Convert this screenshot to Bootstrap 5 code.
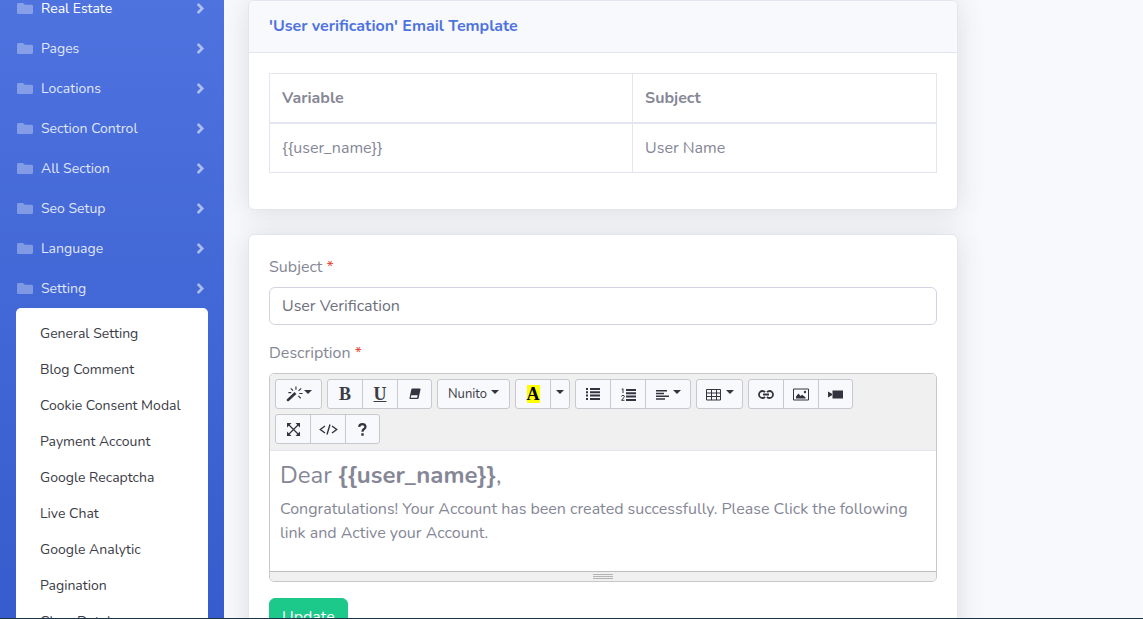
<!DOCTYPE html>
<html lang="en">
<head>
<meta charset="utf-8">
<meta name="viewport" content="width=device-width, initial-scale=1">
<title>User verification Email Template</title>
<link href="https://cdn.jsdelivr.net/npm/bootstrap@5.3.0/dist/css/bootstrap.min.css" rel="stylesheet">
<script src="https://cdn.jsdelivr.net/npm/bootstrap@5.3.0/dist/js/bootstrap.bundle.min.js" defer></script>
<style>
  body { font-family: Nunito, Lato, sans-serif; font-size: 16px; line-height: 24px; color: #858796; background: #f8f9fc; }
  .admin-sidebar { width: 224px; background: linear-gradient(180deg, #4e73df 0%, #365ccd 100%); }
  .side-list { margin-top: -12px; }
  .side-link { height: 40px; padding: 2px 20px 0 17px; gap: 8px; font-size: 14px; color: rgba(255,255,255,.85); text-decoration: none; }
  .side-link:hover { color: #fff; }
  .side-link svg { fill: #fff; flex: none; margin-bottom: 2px; }
  .side-link .folder { opacity: .32; }
  .side-link .angle { opacity: .55; margin-left: auto; }
  .side-sub { margin: 0 16px; padding: 8px 0; border-radius: 5px; background: #fff; }
  .side-sub a { display: block; padding: 0 24px; font-size: 14px; line-height: 36px; color: #3a3b45; text-decoration: none; }
  .content-col { max-width: 710px; }
  .panel { border: 1px solid #e3e6f0; border-radius: 6px; box-shadow: 0 2px 28px rgba(58,59,69,.15); }
  .panel .card-header { padding: 13px 20px; background: #f8f9fc; border-bottom: 1px solid #e3e6f0; }
  .panel .card-body { padding: 20px; }
  .panel h1 { font-size: 16px; line-height: 25px; color: #4e73df; }
  .var-table { color: #858796; border-color: #e3e6f0; }
  .var-table th, .var-table td { padding: 12px; border: 1px solid #e3e6f0; color: #858796; background: #fff; }
  .var-table thead th { border-bottom-width: 2px; }
  .form-label { margin-bottom: 8px; }
  .req { color: #e74a3b; }
  .subject-input, .subject-input:focus { height: 38px; border: 1px solid #d1d3e2; border-radius: 6px; color: #6e707e; }
  .editor { border: 1px solid #c8c8cb; border-radius: 5px; overflow: hidden; }
  .editor-bar { padding: 5px 5px 6px; gap: 5px; background: #f0f0f0; border-bottom: 1px solid #e3e6f0; }
  .tool-group { display: flex; height: 30px; border: 1px solid #c8c9ce; border-radius: 3px; background: #f8f9fc; overflow: hidden; }
  .tool { display: flex; align-items: center; justify-content: center; width: 35px; padding: 0; border: 0; background: transparent; color: #3a3b45; font-size: 13px; line-height: 28px; }
  .tool + .tool { border-left: 1px solid #c8c9ce; }
  .tool-group .tool:first-child, .tool-group .tool:last-child { width: 34px; }
  .tool-group .tool.tool-wide { width: 45px; }
  .tool-group .tool.tool-font { width: 71px; }
  .tool-group .tool.tool-caret { width: 19px; }
  .tool svg { fill: #33343f; stroke: none; flex: none; }
  .tool svg .ln { fill: none; stroke: #33343f; }
  .tool .caret { width: 8px; height: 4px; margin-bottom: 5px; }
  .serif { font-family: "Liberation Serif", serif; font-weight: 700; font-size: 18px; line-height: 18px; }
  .mark-a { color: #000; background: #ff0; }
  .editor-text { padding: 10px; background: #fff; }
  .editor-text h2 { font-size: 24px; line-height: 28px; margin-bottom: 8px; font-weight: 400; }
  .editor-text p { margin-bottom: 16px; }
  .editor-status { height: 10px; padding-top: 2px; background: #f0f0f0; border-top: 1px solid #bdbdbd; }
  .editor-status i { display: block; width: 20px; height: 1px; margin: 0 auto 1px; background: #b4b4b4; }
  .btn-update { height: 38px; padding: 6px 12px; color: #fff; background: #1cc88a; border: 1px solid #1cc88a; border-radius: 6px; line-height: 24px; }
  .taskline { height: 1px; background: #1f3347; }
</style>
</head>
<body>
<svg class="d-none">
  <symbol id="i-folder" viewBox="0 0 16 12" preserveAspectRatio="none"><path d="M1.500 0h4.500l1.800 1.800h6.700A1.500 1.500 0 0 1 16 3.300v7.200a1.500 1.500 0 0 1-1.500 1.500h-13A1.500 1.500 0 0 1 0 10.500v-9A1.500 1.500 0 0 1 1.500 0z"/></symbol>
  <symbol id="i-angle" viewBox="0 0 8 11"><path d="M7.600 6.100 3.200 10.500a.8.8 0 0 1-1.100 0l-.8-.8a.8.8 0 0 1 0-1.100L4.400 5.500 1.300 2.400a.8.8 0 0 1 0-1.100l.8-.8a.8.8 0 0 1 1.100 0l4.400 4.400a.8.8 0 0 1 0 1.200z"/></symbol>
  <symbol id="i-caret" viewBox="0 0 8 4"><path d="M0 0h8L4 4z"/></symbol>
</svg>
<div class="d-flex vh-100 overflow-hidden">
  <nav class="admin-sidebar flex-shrink-0 overflow-hidden" aria-label="Admin">
    <div class="side-list">
      <a class="side-link d-flex align-items-center" href="#"><svg class="folder" width="16" height="11"><use href="#i-folder"/></svg>Real Estate<svg class="angle" width="8" height="11"><use href="#i-angle"/></svg></a>
      <a class="side-link d-flex align-items-center" href="#"><svg class="folder" width="16" height="11"><use href="#i-folder"/></svg>Pages<svg class="angle" width="8" height="11"><use href="#i-angle"/></svg></a>
      <a class="side-link d-flex align-items-center" href="#"><svg class="folder" width="16" height="11"><use href="#i-folder"/></svg>Locations<svg class="angle" width="8" height="11"><use href="#i-angle"/></svg></a>
      <a class="side-link d-flex align-items-center" href="#"><svg class="folder" width="16" height="11"><use href="#i-folder"/></svg>Section Control<svg class="angle" width="8" height="11"><use href="#i-angle"/></svg></a>
      <a class="side-link d-flex align-items-center" href="#"><svg class="folder" width="16" height="11"><use href="#i-folder"/></svg>All Section<svg class="angle" width="8" height="11"><use href="#i-angle"/></svg></a>
      <a class="side-link d-flex align-items-center" href="#"><svg class="folder" width="16" height="11"><use href="#i-folder"/></svg>Seo Setup<svg class="angle" width="8" height="11"><use href="#i-angle"/></svg></a>
      <a class="side-link d-flex align-items-center" href="#"><svg class="folder" width="16" height="11"><use href="#i-folder"/></svg>Language<svg class="angle" width="8" height="11"><use href="#i-angle"/></svg></a>
      <a class="side-link d-flex align-items-center" href="#"><svg class="folder" width="16" height="11"><use href="#i-folder"/></svg>Setting<svg class="angle" width="8" height="11"><use href="#i-angle"/></svg></a>
      <div class="side-sub">
        <a href="#">General Setting</a>
        <a href="#">Blog Comment</a>
        <a href="#">Cookie Consent Modal</a>
        <a href="#">Payment Account</a>
        <a href="#">Google Recaptcha</a>
        <a href="#">Live Chat</a>
        <a href="#">Google Analytic</a>
        <a href="#">Pagination</a>
        <a href="#">Clear Database</a>
      </div>
    </div>
  </nav>
  <main class="flex-grow-1 px-4">
    <div class="content-col">
      <section class="card panel mb-4">
        <div class="card-header"><h1 class="fw-bold m-0">'User verification' Email Template</h1></div>
        <div class="card-body">
          <table class="table var-table mb-3">
            <thead><tr><th>Variable</th><th>Subject</th></tr></thead>
            <tbody><tr><td>{{user_name}}</td><td>User Name</td></tr></tbody>
          </table>
        </div>
      </section>
      <section class="card panel">
        <form class="card-body">
          <div class="mb-3">
            <label class="form-label d-block" for="subject">Subject <span class="req">*</span></label>
            <input class="form-control subject-input" id="subject" type="text" value="User Verification">
          </div>
          <div class="mb-3">
            <label class="form-label d-block" id="desc-label">Description <span class="req">*</span></label>
            <div class="editor">
              <div class="editor-bar d-flex flex-wrap">
                <div class="tool-group">
                  <button class="tool tool-wide" type="button" aria-label="Style"><svg width="18" height="18" viewBox="0 0 19 18"><path d="M1 14.500 9 7l2 2-8 7.500q-1.200.6-2-.3t0-1.700z"/><path class="ln" stroke-width="1.200" d="M10.500 1v3.500M5 3l2.500 2.500M2.500 7.500h3M16 3l-2.700 2.700M14 8.500h3.500M13 11l2.500 2.500"/></svg><svg class="caret"><use href="#i-caret"/></svg></button>
                </div>
                <div class="tool-group">
                  <button class="tool" type="button" aria-label="Bold"><span class="serif">B</span></button>
                  <button class="tool" type="button" aria-label="Underline"><span class="serif text-decoration-underline">U</span></button>
                  <button class="tool" type="button" aria-label="Remove font style"><svg width="12" height="12" viewBox="0 0 12 12"><path fill-rule="evenodd" d="M3.500.5h7.200q1 0 .8 1L9.700 10q-.2 1-1.200 1H1.300q-1 0-.8-1L2.300 1.500q.2-1 1.200-1zM2.300 7.200l-.6 2.600h6.400l.6-2.600z"/></svg></button>
                </div>
                <div class="tool-group">
                  <button class="tool tool-font" type="button">Nunito<svg class="caret ms-1"><use href="#i-caret"/></svg></button>
                </div>
                <div class="tool-group">
                  <button class="tool" type="button" aria-label="Recent colour"><span class="serif mark-a">A</span></button>
                  <button class="tool tool-caret" type="button" aria-label="More colours"><svg class="caret"><use href="#i-caret"/></svg></button>
                </div>
                <div class="tool-group">
                  <button class="tool" type="button" aria-label="Unordered list"><svg width="14" height="12" viewBox="0 0 14 12"><path d="M0 0h2v2H0zM4 0h10v2H4zM0 3.300h2v2H0zM4 3.300h10v2H4zM0 6.600h2v2H0zM4 6.600h10v2H4zM0 10h2v2H0zM4 10h10v2H4z"/></svg></button>
                  <button class="tool" type="button" aria-label="Ordered list"><svg width="15" height="13" viewBox="0 0 15 13"><path d="M5 1h10v2H5zM5 4.300h10v2H5zM5 7.600h10v2H5zM5 11h10v2H5z"/><path class="ln" d="M.7 1.500 2 .7V5M.5 8.500q.3-1.200 1.500-1.200t1.300 1.200q0 .8-2.800 3.800h3"/></svg></button>
                  <button class="tool tool-wide" type="button" aria-label="Paragraph"><svg width="13" height="11" viewBox="0 0 13 11"><path d="M0 1h11v1.500H0zM0 3.700h8v1.500H0zM0 6.500h13V8H0zM0 9.300h9v1.500H0z"/></svg><svg class="caret ms-1"><use href="#i-caret"/></svg></button>
                </div>
                <div class="tool-group">
                  <button class="tool tool-wide" type="button" aria-label="Table"><svg width="16" height="13" viewBox="0 0 16 13"><path class="ln" d="M.5 1.500h14v10.500H.5zM.5 5h14M.5 8.500h14M5.500 1.500V12M10.500 1.500V12"/></svg><svg class="caret ms-1"><use href="#i-caret"/></svg></button>
                </div>
                <div class="tool-group">
                  <button class="tool" type="button" aria-label="Link"><svg width="16" height="9" viewBox="0 0 16 9"><path class="ln" stroke-width="1.800" d="M7 2.200Q6 1 4.500 1a3.500 3.500 0 0 0 0 7Q6 8 7 6.800M9 2.200Q10 1 11.500 1a3.500 3.500 0 0 1 0 7Q10 8 9 6.800M5 4.500h6"/></svg></button>
                  <button class="tool" type="button" aria-label="Picture"><svg width="16" height="13" viewBox="0 0 16 13"><path class="ln" d="M.5 1h15v11H.5z"/><path d="M3 10.500V8.500l2.500-3 2 2.500L9 6.800l3.500 2.500v1.200z"/><circle cx="12" cy="4" r="1.200"/></svg></button>
                  <button class="tool" type="button" aria-label="Video"><svg width="15" height="9" viewBox="0 0 15 9"><path d="M4.500.5H15v8H4.500zM0 1.500l4 2.200v1.600L0 7.500z"/></svg></button>
                </div>
                <div class="tool-group">
                  <button class="tool" type="button" aria-label="Full screen"><svg width="13" height="13" viewBox="0 0 13 13"><path class="ln" stroke-width="1.300" d="m1.500 1.500 10 10M11.500 1.500l-10 10"/><path d="M0 0h4.500L0 4.500zM13 0v4.500L8.500 0zM0 13V8.500L4.500 13zM13 13H8.500L13 8.500z"/></svg></button>
                  <button class="tool" type="button" aria-label="Code view"><svg width="19" height="11" viewBox="0 0 19 11"><path class="ln" stroke-width="1.400" d="M6 2 1.300 5.500 6 9M13 2l4.700 3.500L13 9M11 .5l-3 10"/></svg></button>
                  <button class="tool" type="button" aria-label="Help"><svg width="9" height="13" viewBox="0 0 9 13"><path class="ln" stroke-width="2.200" d="M1.200 3.800Q1.400 1.200 4.300 1.200T7.500 3.700Q7.500 5 6 6T4.500 8.800"/><path d="M3.300 10.300h2.400v2.400H3.300z"/></svg></button>
                </div>
              </div>
              <div class="editor-text" contenteditable="true" role="textbox" aria-labelledby="desc-label" spellcheck="false">
                <h2>Dear <b>{{user_name}}</b>,</h2>
                <p>Congratulations! Your Account has been created successfully. Please Click the following link and Active your Account.</p>
              </div>
              <div class="editor-status"><i></i><i></i><i></i></div>
            </div>
          </div>
          <button class="btn btn-update" type="submit">Update</button>
        </form>
      </section>
    </div>
  </main>
</div>
<div class="taskline fixed-bottom"></div>
</body>
</html>
